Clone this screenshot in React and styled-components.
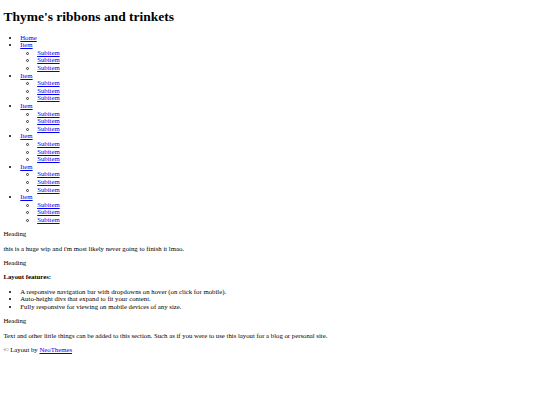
import React from 'react';
import styled, { createGlobalStyle } from 'styled-components';

// the reference is a 1280px-wide default page shrunk to 540px: everything is 0.4219x
const GlobalStyle = createGlobalStyle`
  body {
    margin: 0 3.375px 3.375px;
    font-family: "Liberation Serif", "Times New Roman", serif;
    font-size: 6.75px;
    line-height: 7.59px;
    color: #000;
    background: #fff;
  }
`;

const Title = styled.h1`
  font-size: 13.5px;
  line-height: 15.6px;
  font-weight: bold;
  margin: 9.05px 0;
`;

const List = styled.ul`
  margin: 6.75px 0;
  padding-left: 16.875px;
  list-style-type: disc;
`;

const SubList = styled.ul`
  margin: 0;
  padding-left: 16.875px;
  list-style: none;
`;

const SubItem = styled.li`
  &::before {
    content: '';
    display: inline-block;
    box-sizing: border-box;
    width: 3px;
    height: 3px;
    border: 0.6px solid #333;
    border-radius: 50%;
    margin-left: -10.9px;
    margin-right: 7.9px;
    vertical-align: middle;
  }
`;

const NavLink = styled.a`
  color: #0000ee;
  text-decoration: underline;
`;

const Para = styled.p`
  margin: 6.75px 0;
  font-weight: ${p => (p.$bold ? 'bold' : 'normal')};
`;

const navItems = ['Item', 'Item', 'Item', 'Item', 'Item', 'Item'];

const features = [
  'A responsive navigation bar with dropdowns on hover (on click for mobile).',
  'Auto-height divs that expand to fit your content.',
  'Fully responsive for viewing on mobile devices of any size.',
];

export default function App() {
  return (
    <>
      <GlobalStyle />
      <header>
        <Title>Thyme's ribbons and trinkets</Title>
      </header>
      <nav>
        <List>
          <li><NavLink href="#">Home</NavLink></li>
          {navItems.map((item, i) => (
            <li key={i}>
              <NavLink href="#">{item}</NavLink>
              <SubList>
                <SubItem><NavLink href="#">Subitem</NavLink></SubItem>
                <SubItem><NavLink href="#">Subitem</NavLink></SubItem>
                <SubItem><NavLink href="#">Subitem</NavLink></SubItem>
              </SubList>
            </li>
          ))}
        </List>
      </nav>
      <main>
        <section>
          <Para>Heading</Para>
          <Para>this is a huge wip and i'm most likely never going to finish it lmao.</Para>
        </section>
        <section>
          <Para>Heading</Para>
          <Para $bold>Layout features:</Para>
          <List>
            {features.map(f => <li key={f}>{f}</li>)}
          </List>
        </section>
        <section>
          <Para>Heading</Para>
          <Para>Text and other little things can be added to this section. Such as if you were to use this layout for a blog or personal site.</Para>
        </section>
      </main>
      <footer>
        <Para>© Layout by <NavLink href="#">NeoThemes</NavLink></Para>
      </footer>
    </>
  );
}
